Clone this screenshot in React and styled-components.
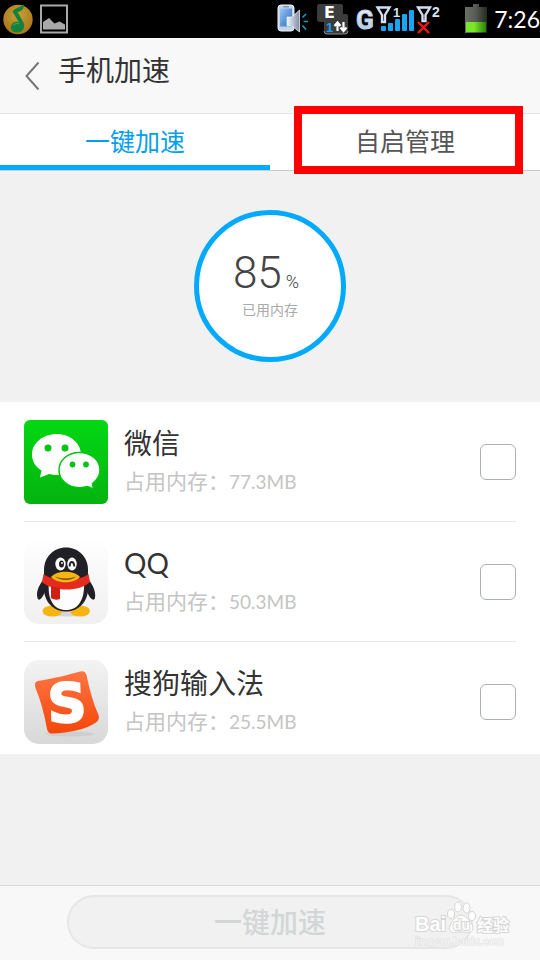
import styled, { createGlobalStyle } from "styled-components"

const apps = [
    { id: "wechat", name: "微信", memory: "77.3MB", Icon: WechatIcon },
    { id: "qq", name: "QQ", memory: "50.3MB", Icon: QQIcon },
    { id: "sogou", name: "搜狗输入法", memory: "25.5MB", Icon: SogouIcon },
]

function MusicIcon() {
    return (
        <svg width="32" height="32" viewBox="0 0 32 32" aria-hidden="true">
            <defs>
                <radialGradient id="gold" cx="0.5" cy="0.35" r="0.65">
                    <stop offset="0" stopColor="#c9a034" />
                    <stop offset="1" stopColor="#a8761c" />
                </radialGradient>
            </defs>
            <circle cx="16" cy="16.500" r="14.700" fill="url(#gold)" />
            <path d="M10.500 8.500C14 4 19 5 21.300 1C22.800 5 20 8.500 15.500 9L21.500 19.500C24 25 20 29.300 15.500 29.500C10.500 29.500 8 26.500 9 23C10 19.500 14 17.800 17 19.500Z" fill="#12823c" />
            <path d="M11 22.500C12.500 20.500 15.500 20 17 21" stroke="#3fa35c" strokeWidth="1.200" fill="none" />
        </svg>
    )
}

function GalleryIcon() {
    return (
        <svg width="28" height="30" viewBox="0 0 28 30" aria-hidden="true">
            <rect x="1" y="1.500" width="26" height="27" fill="none" stroke="#a9a9a9" strokeWidth="2" />
            <path d="M3 25.500V18L9 14L14.500 19.500L19.500 17.500L25 20.500V25.500Z" fill="#a9a9a9" />
        </svg>
    )
}

function SpeakerPhoneIcon() {
    return (
        <svg width="32" height="30" viewBox="0 0 32 30" aria-hidden="true">
            <defs>
                <linearGradient id="screen" x1="0" y1="0" x2="1" y2="1">
                    <stop offset="0" stopColor="#9cc8f4" />
                    <stop offset="1" stopColor="#2468bd" />
                </linearGradient>
                <linearGradient id="cone">
                    <stop offset="0" stopColor="#f2f5f8" />
                    <stop offset="1" stopColor="#7e8fa5" />
                </linearGradient>
            </defs>
            <rect x="1" y="1" width="16" height="26" rx="3" fill="#c3d3e8" stroke="#eef3fa" />
            <rect x="3" y="4.500" width="12" height="18" fill="url(#screen)" />
            <rect x="6" y="2" width="6" height="1.500" rx="0.700" fill="#8193aa" />
            <path d="M10 13H15L22.500 6V28L15 22H10Z" fill="url(#cone)" stroke="#e9eef4" strokeWidth="0.800" />
            <path d="M25.500 13.500L29 10M26.500 17.500H31M25.500 21.500L29 25.500" stroke="#169db8" strokeWidth="1.600" fill="none" />
        </svg>
    )
}

function DataIcon() {
    return (
        <svg width="33" height="32" viewBox="0 0 33 32" aria-hidden="true">
            <path d="M3 1H25Q27 1 27 3V11H30Q32 11 32 13V28Q32 31 29 31H11Q8 31 8 28V19H4Q1 19 1 16V4Q1 1 3 1Z" fill="#3c3c3c" />
            <path d="M8 28Q8 31 11 31H29Q32 31 32 28" stroke="#8b8b8b" fill="none" />
            <text x="8" y="15" fill="#fff" fontFamily="DejaVu Sans" fontSize="16" fontWeight="700">E</text>
            <text x="10" y="29" fill="#18a0f0" fontFamily="Liberation Sans" fontSize="13" fontWeight="700">1</text>
            <path d="M21.500 28V20.500M18.500 23L21.500 19.500L24.500 23M27.500 19V26.500M24.500 24.500L27.500 28L30.500 24.500" stroke="#fff" strokeWidth="2.200" fill="none" />
        </svg>
    )
}

function SignalIcon() {
    return (
        <svg width="86" height="32" viewBox="0 0 86 32" aria-hidden="true">
            <defs>
                <linearGradient id="metal" x1="0" y1="0" x2="0" y2="1">
                    <stop offset="0" stopColor="#f5faff" />
                    <stop offset="1" stopColor="#a6bfdc" />
                </linearGradient>
            </defs>
            <text x="0" y="26" fill="url(#metal)" stroke="#bdd0e6" strokeWidth="1" fontFamily="Roboto" fontSize="26" fontWeight="700">G</text>
            <path d="M21.500 4.500H33.500L29 12V19H26V12Z" fill="none" stroke="#d3e0ef" strokeWidth="2.400" />
            <path d="M62 4.500H74L69.500 12V18H66.500V12Z" fill="none" stroke="#d3e0ef" strokeWidth="2.400" />
            <text x="37" y="14" fill="#d7e4f2" fontFamily="Liberation Sans" fontSize="13" fontWeight="700">1</text>
            <text x="76" y="14" fill="#d7e4f2" fontFamily="Liberation Sans" fontSize="14" fontWeight="700">2</text>
            <g fill="#18a6f4">
                <rect x="25" y="23" width="5" height="5" rx="1" />
                <rect x="32" y="20" width="5" height="8" rx="1" />
                <rect x="39" y="16" width="5" height="12" rx="1" />
                <rect x="46" y="11" width="5" height="17" rx="1" />
                <rect x="53" y="7" width="5" height="21" rx="1" />
            </g>
            <path d="M62 19L73 30M73 19L62 30" stroke="#fa1410" strokeWidth="2.400" />
        </svg>
    )
}

function BatteryIcon() {
    return (
        <svg width="22" height="30" viewBox="0 0 22 30" aria-hidden="true">
            <defs>
                <linearGradient id="shell">
                    <stop offset="0" stopColor="#6c6f65" />
                    <stop offset="0.450" stopColor="#5a5d55" />
                    <stop offset="1" stopColor="#262b22" />
                </linearGradient>
                <linearGradient id="charge">
                    <stop offset="0" stopColor="#7ae52a" />
                    <stop offset="0.400" stopColor="#7be82b" />
                    <stop offset="1" stopColor="#2b8206" />
                </linearGradient>
            </defs>
            <path d="M8 0H14V3H22V29H0V3H8Z" fill="url(#shell)" />
            <rect x="1" y="18" width="20" height="10" fill="url(#charge)" />
        </svg>
    )
}

function WechatIcon() {
    return (
        <svg width="84" height="84" viewBox="0 0 84 84" aria-hidden="true">
            <defs>
                <linearGradient id="wechat-bg" x1="0" y1="0" x2="0" y2="1">
                    <stop offset="0" stopColor="#03d813" />
                    <stop offset="1" stopColor="#04b30f" />
                </linearGradient>
            </defs>
            <rect width="84" height="84" rx="6" fill="url(#wechat-bg)" />
            <path d="M33 14C46 14 57 23 57 34.500C57 46 46 55 33 55C30 55 27 54.500 25 54L16 57.500L17.500 50.500C11.500 47 8 41 8 34.500C8 23 19 14 33 14Z" fill="#fff" />
            <path d="M55.500 32.500C67 32.500 76 40 76 50C76 55.500 73 60 68.500 63.500L69.500 69L63.500 66.500C61 67.300 58 67.700 55.500 67.700C44 67.700 35 60 35 50C35 40 44 32.500 55.500 32.500Z" fill="#fff" stroke="#05c411" strokeWidth="1.500" />
            <g fill="#05c411">
                <circle cx="24" cy="28" r="3.500" />
                <circle cx="41" cy="28" r="3.500" />
                <circle cx="48.500" cy="44.500" r="2.900" />
                <circle cx="62" cy="44.500" r="2.900" />
            </g>
        </svg>
    )
}

function QQIcon() {
    return (
        <svg width="84" height="84" viewBox="0 0 84 84" aria-hidden="true">
            <defs>
                <linearGradient id="qq-bg" x1="0" y1="0" x2="0" y2="1">
                    <stop offset="0" stopColor="#fefefe" />
                    <stop offset="1" stopColor="#f0f0f0" />
                </linearGradient>
            </defs>
            <rect width="84" height="84" rx="15" fill="url(#qq-bg)" />
            <ellipse cx="42" cy="74" rx="23" ry="2.500" fill="#d5d5d5" />
            <ellipse cx="28.500" cy="71" rx="10" ry="5.500" fill="#f7b511" />
            <ellipse cx="56" cy="71" rx="10" ry="5.500" fill="#f7b511" />
            <path d="M20 39C14 46 12 53 13.500 58C14.500 61 17 60 20 54L26 42ZM64 39C70 46 72 53 71 58C70 61 67 60 64 54L58 42Z" fill="#202026" />
            <path d="M42 7.500C54.500 7.500 64 17 64 30V49C64 61 55 71.500 42 71.500C29 71.500 20 61 20 49V30C20 17 29.500 7.500 42 7.500Z" fill="#202026" />
            <path d="M25 42H60C61 60 54 70 42 70C30 70 23 60 25 42Z" fill="#fdfdfd" />
            <ellipse cx="36.500" cy="24" rx="5.200" ry="6.500" fill="#fff" />
            <ellipse cx="48" cy="24" rx="4.700" ry="6.500" fill="#fff" />
            <ellipse cx="37.500" cy="24" rx="2.500" ry="3.500" fill="#202026" />
            <circle cx="38" cy="23" r="0.900" fill="#fff" />
            <path d="M45.700 26.500C45.700 20.500 49.800 20.500 50.300 26.500" stroke="#202026" strokeWidth="2" fill="none" />
            <path d="M19.500 34C30 42 54 42 64.500 34L66 42C56 52 29 52 18 42Z" fill="#e62b1e" />
            <path d="M27 46L36 48V59C33 60 30 60 27 58Z" fill="#cf2018" />
            <path d="M27 37C33 30 50 30 56 37C50 44 33 44 27 37Z" fill="#f7b511" />
            <path d="M31 36.500C37 39 46 39 52 36.500C48 41 36 41 31 36.500Z" fill="#7e4512" />
        </svg>
    )
}

function SogouIcon() {
    return (
        <svg width="84" height="84" viewBox="0 0 84 84" aria-hidden="true">
            <defs>
                <linearGradient id="sogou-bg" x1="0" y1="0" x2="0" y2="1">
                    <stop offset="0" stopColor="#f3f3f3" />
                    <stop offset="1" stopColor="#d8d8d8" />
                </linearGradient>
                <linearGradient id="sogou-tile" x1="0" y1="0" x2="0" y2="1">
                    <stop offset="0" stopColor="#ff7443" />
                    <stop offset="1" stopColor="#f44709" />
                </linearGradient>
            </defs>
            <rect width="84" height="84" rx="15" fill="url(#sogou-bg)" />
            <ellipse cx="46" cy="74" rx="24" ry="2.500" fill="#cecece" />
            <path d="M14 21C29 18.500 44 15 56 11.500Q61 10 62.500 15C65.500 29 69 43 74.500 55Q76 59.500 72 62.500C63 69 45 73 28 73.500Q24 73.500 23 69C20.500 54 16.500 40 11.500 28Q9.500 22 14 21Z" fill="url(#sogou-tile)" />
            <text x="43" y="62" textAnchor="middle" transform="rotate(-2 43 43)" fill="#fff" stroke="#fff" strokeWidth="2" fontFamily="DejaVu Sans" fontSize="54" fontWeight="700">S</text>
        </svg>
    )
}

function Watermark() {
    return (
        <WatermarkSvg width="100" height="50" viewBox="0 0 100 50" aria-hidden="true">
            <g fill="#fdfdfd" stroke="#d6d6d6" strokeWidth="1">
                <ellipse cx="39" cy="14" rx="3.500" ry="4.500" />
                <ellipse cx="46" cy="7" rx="3.500" ry="5" />
                <ellipse cx="54.500" cy="8" rx="3.500" ry="5" />
                <ellipse cx="60" cy="16" rx="3.500" ry="4.500" />
                <path d="M49 15C54 15 62 24 61 29C60 34 55 32 49 32C43 32 38 34 37.500 29C37 24 44 15 49 15Z" />
            </g>
            <g fill="#fdfdfd" stroke="#d6d6d6" strokeWidth="2" paintOrder="stroke" fontFamily="Liberation Sans, Noto Sans CJK SC, sans-serif" fontWeight="700">
                <text x="3" y="31" fontSize="20">Bai</text>
                <text x="41" y="30" fontSize="14">du</text>
                <text x="65" y="31" fontSize="16">经验</text>
            </g>
            <text x="3" y="45" fontSize="11" fill="#f8f8f8" stroke="#dedede" strokeWidth="1" paintOrder="stroke" fontFamily="Liberation Sans">jingyan.baidu.com</text>
        </WatermarkSvg>
    )
}

function AppRow({ app }) {
    const { id, name, memory, Icon } = app

    return (
        <Row>
            <Icon />
            <RowText htmlFor={id}>
                <AppName>{name}</AppName>
                <AppMemory>占用内存：<Amount>{memory}</Amount></AppMemory>
            </RowText>
            <Checkbox type="checkbox" id={id} />
        </Row>
    )
}

function App() {
    return (
    <>
    <GlobalStyle />
    <Page>
        <StatusBar>
            <MusicIcon />
            <GalleryIcon />
            <StatusRight>
                <SpeakerPhoneIcon />
                <DataIcon />
                <SignalIcon />
                <BatterySlot><BatteryIcon /></BatterySlot>
                <Clock>7:26</Clock>
            </StatusRight>
        </StatusBar>
        <Header>
            <BackButton aria-label="返回">
                <svg width="16" height="30" viewBox="0 0 16 30">
                    <path d="M14.500 1.500L2.500 15L14.500 28.500" fill="none" stroke="#777" strokeWidth="2" />
                </svg>
            </BackButton>
            <Title>手机加速</Title>
        </Header>
        <Tabs>
            <Tab $active>一键加速</Tab>
            <Tab>自启管理<Highlight /></Tab>
        </Tabs>
        <Summary>
            <Gauge>
                <Percent>85<Unit>%</Unit></Percent>
                <GaugeLabel>已用内存</GaugeLabel>
            </Gauge>
        </Summary>
        <List>
            {apps.map((app) => <AppRow key={app.id} app={app} />)}
        </List>
        <Footer>
            <BoostButton disabled>一键加速</BoostButton>
            <Watermark />
        </Footer>
    </Page>
    </>
    )
}

export default App

const GlobalStyle = createGlobalStyle`
    * {
        box-sizing: border-box;
    }

    body {
        margin: 0;
        background: #f1f1f1;
        font-family: Lato, "Noto Sans CJK SC", sans-serif;
    }

    button {
        font-family: inherit;
        border: 0;
        padding: 0;
        background: none;
    }

    svg {
        display: block;
        flex-shrink: 0;
    }
`

const Page = styled.div`
    min-height: 100vh;
    display: flex;
    flex-direction: column;
`

const StatusBar = styled.div`
    height: 38px;
    padding: 0 0 0 2px;
    display: flex;
    align-items: center;
    gap: 6px;
    background: #000;
`

const StatusRight = styled.div`
    margin-left: auto;
    display: flex;
    align-items: center;
    gap: 7px;
`

const BatterySlot = styled.div`
    padding-left: 16px;
`

const Clock = styled.span`
    color: #fff;
    font-size: 23px;
    line-height: 30px;
`

const Header = styled.header`
    height: 76px;
    padding: 0 24px;
    display: flex;
    align-items: center;
    gap: 18px;
    background: #f8f8f8;
    border-bottom: 1px solid #e6e6e6;
`

const BackButton = styled.button`
    width: 16px;
    height: 30px;
`

const Title = styled.h1`
    margin: 0;
    padding-bottom: 12px;
    color: #333;
    font-size: 28px;
    line-height: 32px;
    font-weight: 400;
`

const Tabs = styled.nav`
    display: flex;
    background: #fff;
    border-bottom: 1px solid #ccc;
`

const Tab = styled.button`
    position: relative;
    flex: 1;
    height: 56px;
    padding-top: 2px;
    border-bottom: 5px solid ${({ $active }) => ($active ? "#03a9fb" : "transparent")};
    color: ${({ $active }) => ($active ? "#03a0ee" : "#555")};
    font-size: 25px;
    line-height: 32px;
`

const Highlight = styled.span`
    position: absolute;
    top: -8px;
    right: 17px;
    bottom: -9px;
    left: 24px;
    border: 8px solid #fe0000;
    pointer-events: none;
`

const Summary = styled.section`
    padding: 39px 0 40px;
    display: flex;
    justify-content: center;
`

const Gauge = styled.div`
    width: 152px;
    height: 152px;
    display: flex;
    flex-direction: column;
    align-items: center;
    gap: 6px;
    padding-top: 36px;
    border: 5px solid #03a9fb;
    border-radius: 50%;
    background: #fff;
`

const Percent = styled.div`
    display: flex;
    align-items: baseline;
    gap: 4px;
    padding-right: 8px;
    color: #444;
    font-family: Roboto, sans-serif;
    font-size: 44px;
    line-height: 44px;
    font-weight: 300;
`

const Unit = styled.span`
    font-size: 18px;
    line-height: 20px;
`

const GaugeLabel = styled.div`
    color: #aaa;
    font-size: 14px;
    line-height: 18px;
`

const List = styled.ul`
    margin: 0;
    padding: 0 24px;
    list-style: none;
    background: #fff;
`

const Row = styled.li`
    padding: 18px 0 17px;
    display: flex;
    align-items: center;
    gap: 16px;
    border-bottom: 1px solid #e8e8e8;

    &:last-child {
        padding-bottom: 10px;
        border-bottom: 0;
    }
`

const RowText = styled.label`
    flex: 1;
    height: 84px;
    padding-top: 6px;
    display: flex;
    flex-direction: column;
    gap: 6px;
`

const AppName = styled.span`
    color: #333;
    font-size: 28px;
    line-height: 34px;
`

const AppMemory = styled.span`
    color: #c4c4c4;
    font-size: 21px;
    line-height: 30px;
`

const Amount = styled.span`
    font-size: 19px;
`

const Checkbox = styled.input`
    appearance: none;
    width: 36px;
    height: 36px;
    margin: 0;
    border: 1px solid #abb0b2;
    border-radius: 6px;
    background: #fff;

    &:checked {
        background: #03a9fb;
    }
`

const Footer = styled.footer`
    position: relative;
    margin-top: auto;
    padding: 9px 67px 11px;
    display: flex;
    background: #f8f8f8;
    border-top: 1px solid #dadada;
`

const BoostButton = styled.button`
    flex: 1;
    height: 54px;
    border: 2px solid #e6e6e6;
    border-radius: 27px;
    background: #f1f1f1;
    color: #d3d6d6;
    font-size: 28px;
    line-height: 32px;
    font-weight: 500;
`

const WatermarkSvg = styled.svg`
    position: absolute;
    right: 28px;
    bottom: 10px;
`
